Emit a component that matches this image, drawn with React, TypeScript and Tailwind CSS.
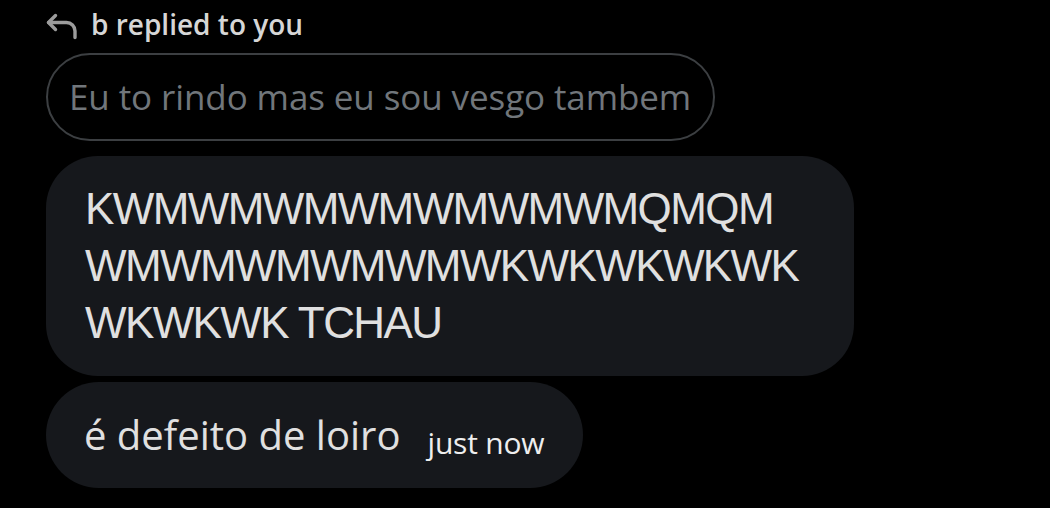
import React from "react";

const ReplyIcon = () => (
  <svg width="33" height="27" viewBox="0 0 33 27" fill="none" stroke="#9c9c9c" strokeWidth="3.4" strokeLinecap="round" strokeLinejoin="round">
    <polyline points="9.5,2.5 2.5,9.5 9.5,16.5" />
    <path d="M2.5 9.5h18a8.5 8.5 0 0 1 8.5 8.5v6.5" />
  </svg>
);

const App = () => {
  return (
    <div className="w-[1050px] h-[508px] bg-black overflow-hidden pl-[46px] pt-[8px] flex flex-col items-start font-['Open_Sans',sans-serif]">
      {/* who replied */}
      <div className="flex items-center gap-[12px] h-[32px] font-semibold text-[28px] text-[#d6d6d6]">
        <span className="mt-[4px]"><ReplyIcon /></span>
        <span>b replied to you</span>
      </div>

      {/* quoted message */}
      <div className="mt-[13px] h-[88px] pl-[21px] pr-[22px] flex items-center rounded-full border-2 border-[#3c3f42] text-[35px] text-[#71767b] tracking-[-0.1px]">
        Eu to rindo mas eu sou vesgo tambem
      </div>

      {/* messages */}
      <div className="mt-[15px] w-[808px] h-[220px] rounded-[52px] bg-[#16181c] pl-[39px] pt-[24px] font-['Liberation_Sans',sans-serif] text-[44px] leading-[57px] text-[#e0e0e0] tracking-[-1.6px]">
        <div>KWMWMWMWMWMWMWMQMQM</div>
        <div>WMWMWMWMWMWKWKWKWKWK</div>
        <div>WKWKWK TCHAU</div>
      </div>

      <div className="mt-[6px] h-[106px] pl-[38px] pr-[39px] rounded-full bg-[#16181c] flex items-center">
        <div className="flex items-end">
          <span className="text-[40px] text-[#e0e0e0]">é defeito de loiro</span>
          <span className="ml-[27px] text-[30px] text-[#eeeeee] tracking-[-0.2px]">just now</span>
        </div>
      </div>
    </div>
  );
};

export default App;
